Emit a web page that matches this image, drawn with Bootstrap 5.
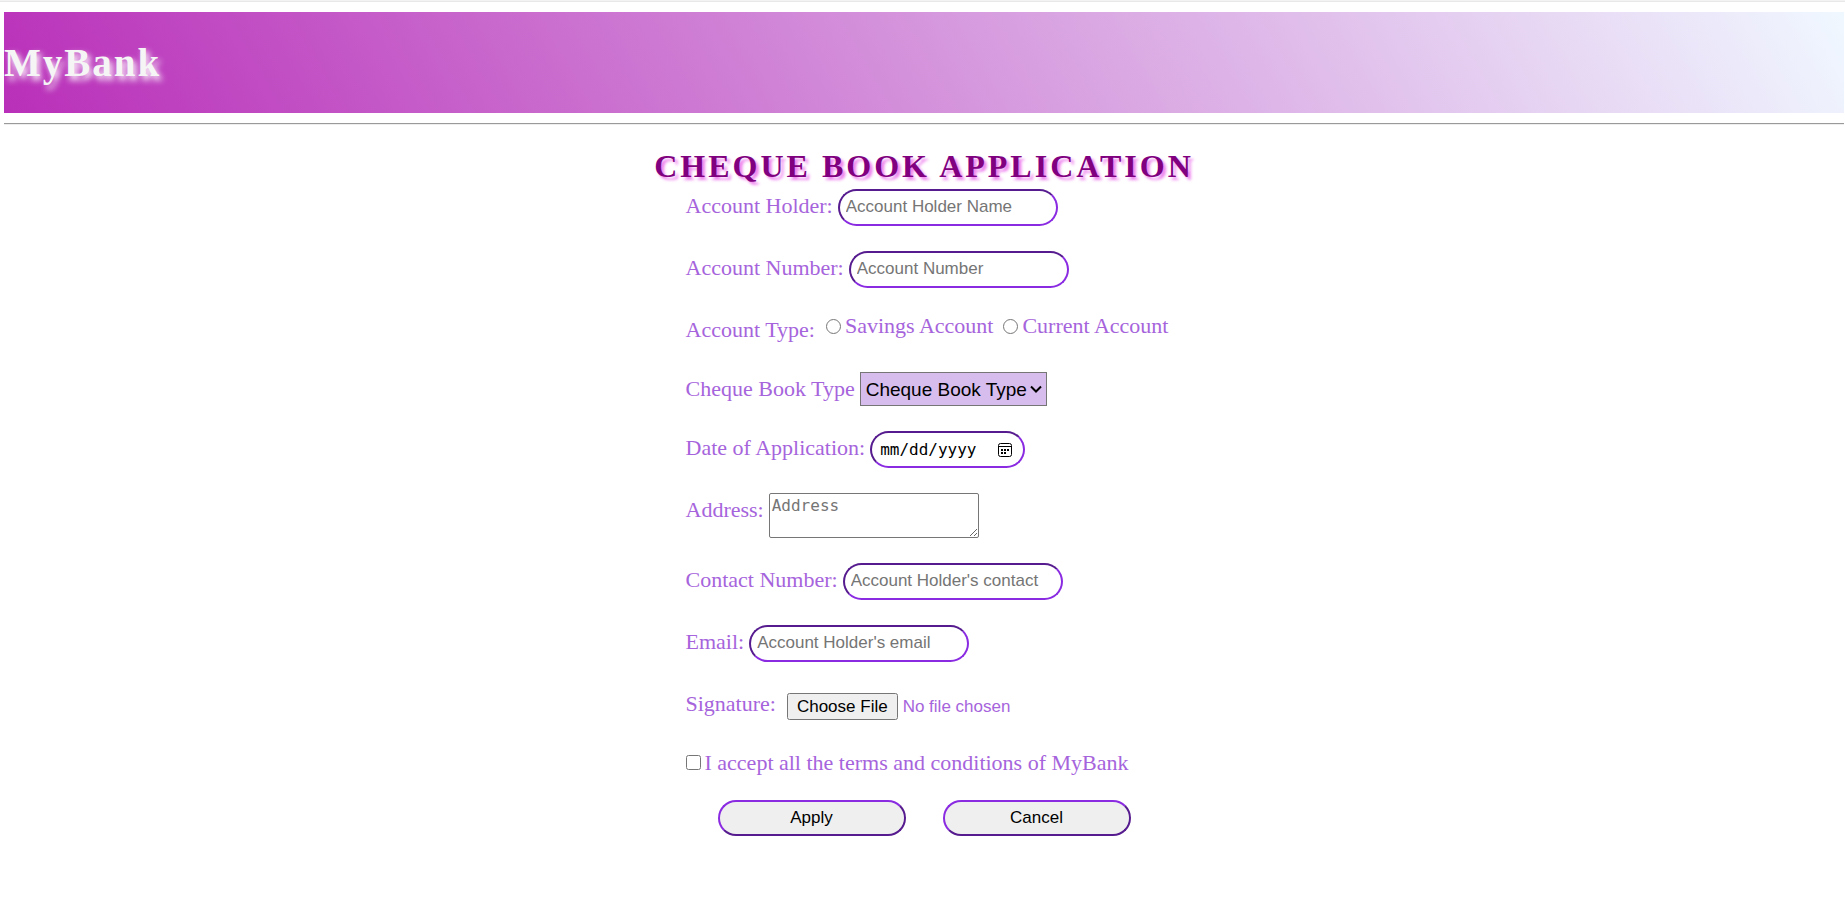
<!DOCTYPE html>
<html lang="en">
<head>
<meta charset="utf-8">
<meta name="viewport" content="width=device-width, initial-scale=1">
<title>MyBank - Cheque Book Application</title>
<link href="https://cdn.jsdelivr.net/npm/bootstrap@5.3.0/dist/css/bootstrap.min.css" rel="stylesheet">
<style>
  body { border-top: 1px solid #f3f3f3; color: #000; background: #fff; }
  .page-wrap { border-top: 1px solid #e8e8e8; padding: 10px 1px 0 4px; }
  .bank-banner { height: 101px; background: linear-gradient(60deg, #b92fb9, #f0f8ff); }
  .bank-name { font: bold 39px/48px "Liberation Serif", serif; letter-spacing: 2px; color: #f5f5f5; text-shadow: 3px 4px 6px #fff; }
  .rule { margin: 10px 0 0; border: 0 solid #9a9a9a; border-top-width: 1px; height: 2px; background: #eee; opacity: 1; }
  .form-title { font: bold 32px/38px "Liberation Serif", serif; letter-spacing: 3px; color: purple; text-shadow: 3px 3px 3px violet; margin-top: 22px; }
  .cheque-form { width: 477px; max-width: 100%; gap: 25px; font: 22px/34px "Liberation Serif", serif; color: #a664dc; margin-top: 4px; }
  .field-row { gap: 5px; min-height: 34px; }
  .pill { border: 2px inset blueviolet; border-radius: 20px; height: 37px; padding: 1px 6px 2px; font: 17px "Liberation Sans", sans-serif; background: #fff; color: #000; }
  .pill-text { width: 220px; }
  .pill-date { width: 155px; padding: 1px 8px; font: 16px "DejaVu Sans Mono", monospace; }
  .pill-date::-webkit-calendar-picker-indicator {
    width: 16px; height: 16px; padding: 0; margin: 0 2px 0 0;
    background: url("data:image/svg+xml,%3Csvg xmlns='http://www.w3.org/2000/svg' viewBox='0 0 16 16' fill='none' stroke='black'%3E%3Crect x='1.5' y='1.5' width='13' height='13' rx='2'/%3E%3Cpath d='M2 4.5h12'/%3E%3Cpath d='M7 8h2M10 8h2M4 11h2M7 11h2M4 8h2' stroke-width='2'/%3E%3C/svg%3E") center/16px no-repeat;
  }
  .pill::placeholder, .address-box::placeholder { color: #757575; opacity: 1; }
  .book-type {
    appearance: none; height: 34px; width: 187px; padding: 0 5px; border: 1px solid #767676; border-radius: 0; color: #000; font: 19px "Liberation Sans", sans-serif;
    background: #d7bdee url("data:image/svg+xml,%3Csvg xmlns='http://www.w3.org/2000/svg' viewBox='0 0 12 8' fill='none' stroke='black' stroke-width='2'%3E%3Cpath d='M1 1.500l5 5 5-5'/%3E%3C/svg%3E") right 4px center/12px 8px no-repeat;
  }
  .address-box { width: 210px; height: 45px; border: 1px solid #767676; border-radius: 2px; padding: 2px; font: 16px "DejaVu Sans Mono", monospace; resize: both; }
  .options { line-height: 26px; gap: 10px; margin-left: 6px; }
  .tick { width: 15px; height: 15px; margin: 0; }
  .file-pick { font: 17px "Liberation Sans", sans-serif; color: #a664dc; margin: 6px 0 0 6px; width: 300px; height: 32px; }
  .file-pick::file-selector-button { padding: 2px 8px; height: 27px; margin-right: 5px; }
  .terms { line-height: 25px; gap: 4px; }
  .actions { gap: 37px; }
  .action-btn { width: 188px; height: 36px; border-style: outset; background: #efefef; }
</style>
</head>
<body>
<div class="page-wrap">
  <header class="bank-banner d-flex align-items-center">
    <h1 class="bank-name mb-0">MyBank</h1>
  </header>
  <hr class="rule">
  <main>
    <h2 class="form-title text-center mb-0">CHEQUE BOOK APPLICATION</h2>
    <form class="cheque-form d-flex flex-column mx-auto">
      <div class="field-row d-flex align-items-start">
        <label for="holder">Account Holder:</label>
        <input class="pill pill-text" type="text" id="holder" placeholder="Account Holder Name">
      </div>
      <div class="field-row d-flex align-items-start">
        <label for="number">Account Number:</label>
        <input class="pill pill-text" type="text" id="number" placeholder="Account Number">
      </div>
      <div class="field-row d-flex align-items-start text-nowrap" role="radiogroup" aria-labelledby="type-label">
        <span id="type-label">Account Type:</span>
        <div class="options d-flex">
          <label class="d-flex align-items-center gap-1"><input class="tick" type="radio" name="type">Savings Account</label>
          <label class="d-flex align-items-center gap-1"><input class="tick" type="radio" name="type">Current Account</label>
        </div>
      </div>
      <div class="field-row d-flex align-items-start">
        <label for="book">Cheque Book Type</label>
        <select class="book-type" id="book">
          <option>Cheque Book Type</option>
        </select>
      </div>
      <div class="field-row d-flex align-items-start">
        <label for="date">Date of Application:</label>
        <input class="pill pill-date" type="date" id="date">
      </div>
      <div class="field-row d-flex align-items-start">
        <label for="address">Address:</label>
        <textarea class="address-box" id="address" placeholder="Address"></textarea>
      </div>
      <div class="field-row d-flex align-items-start">
        <label for="contact">Contact Number:</label>
        <input class="pill pill-text" type="tel" id="contact" placeholder="Account Holder's contact">
      </div>
      <div class="field-row d-flex align-items-start">
        <label for="email">Email:</label>
        <input class="pill pill-text" type="email" id="email" placeholder="Account Holder's email">
      </div>
      <div class="field-row d-flex align-items-start">
        <label for="signature">Signature:</label>
        <input class="file-pick" type="file" id="signature">
      </div>
      <label class="terms d-flex align-items-center"><input class="tick" type="checkbox">I accept all the terms and conditions of MyBank</label>
      <div class="actions d-flex justify-content-center">
        <button class="pill action-btn" type="submit">Apply</button>
        <button class="pill action-btn" type="reset">Cancel</button>
      </div>
    </form>
  </main>
</div>
<script src="https://cdn.jsdelivr.net/npm/bootstrap@5.3.0/dist/js/bootstrap.bundle.min.js"></script>
</body>
</html>
